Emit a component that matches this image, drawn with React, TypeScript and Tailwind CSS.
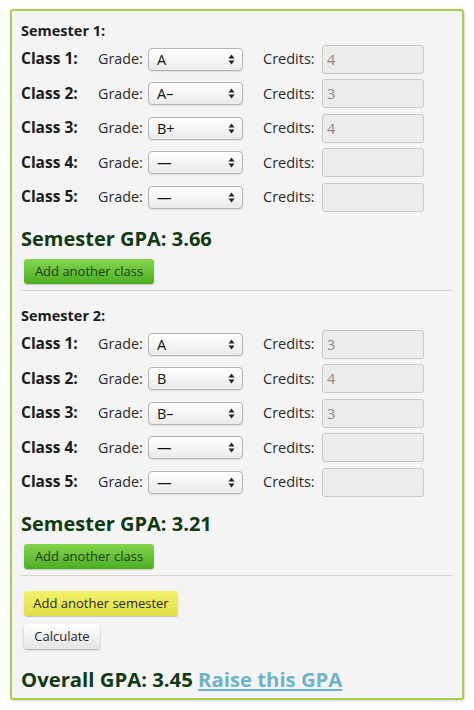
import React from "react";

type Row = { grade: string; credits: string };

const sem1: Row[] = [
  { grade: "A", credits: "4" },
  { grade: "A–", credits: "3" },
  { grade: "B+", credits: "4" },
  { grade: "—", credits: "" },
  { grade: "—", credits: "" },
];
const sem2: Row[] = [
  { grade: "A", credits: "3" },
  { grade: "B", credits: "4" },
  { grade: "B–", credits: "3" },
  { grade: "—", credits: "" },
  { grade: "—", credits: "" },
];

function Arrows() {
  return (
    <svg width="7" height="11" viewBox="0 0 7 11" className="absolute right-[7px] top-[5px]">
      <path d="M3.5 0.5 L6.5 4.5 L0.5 4.5 Z" fill="#222" />
      <path d="M3.5 10.5 L6.5 6.5 L0.5 6.5 Z" fill="#222" />
    </svg>
  );
}

function ClassRow({ i, r }: { i: number; r: Row }) {
  return (
    <div className="flex h-[29px] items-center">
      <span className="w-[77px] text-[15.5px] font-bold text-[#1b1b1b]">Class {i}:</span>
      <span className="w-[50px] text-[14.3px] text-[#2a2a2a]">Grade:</span>
      <div className="relative h-[23px] w-[95px] rounded-[4px] border border-[#b4b4b4] bg-gradient-to-b from-white to-[#ebebeb] pl-[8px] text-[14.5px] leading-[21px] text-[#111] shadow-[0_1px_1px_rgba(0,0,0,0.08)]">
        {r.grade}
        <Arrows />
      </div>
      <span className="ml-[20px] w-[59px] text-[14.5px] text-[#2a2a2a]">Credits:</span>
      <div className="h-[29px] w-[102px] rounded-[3px] border border-[#c9c9c9] bg-[#ececec] pl-[4px] text-[14.5px] leading-[27px] text-[#8a8a8a]">
        {r.credits}
      </div>
    </div>
  );
}

function Semester({ n, rows, gpa }: { n: number; rows: Row[]; gpa: string }) {
  return (
    <div>
      <div className="h-[20px] text-[14.5px] font-bold leading-[20px] text-[#1b1b1b]">Semester {n}:</div>
      <div className="mt-[3.5px] flex flex-col gap-[5.5px]">
        {rows.map((r, k) => (
          <ClassRow key={k} i={k + 1} r={r} />
        ))}
      </div>
      <div className="mt-[13px] h-[28px] text-[20px] font-bold leading-[28px] text-[#0f3a12]">
        Semester GPA: {gpa}
      </div>
      <button className="ml-[3px] mt-[6.5px] h-[25px] w-[130px] rounded-[3px] bg-gradient-to-b from-[#84d64e] to-[#4cae20] text-[13px] text-[#233a14] shadow-[0_1px_1px_rgba(0,0,0,0.2)]">
        Add another class
      </button>
      <div className="mt-[6px] h-px bg-[#d6d6d6]" />
    </div>
  );
}

export default function App() {
  return (
    <div className="min-h-[710px] bg-white pl-[10px] pt-[9px]" style={{ fontFamily: '"Open Sans", sans-serif' }}>
      <div className="h-[691px] w-[454px] rounded-[3px] border-2 border-[#a8d14a] bg-[#f4f4f4] px-[9px] pt-[10px] shadow-[1px_1px_2px_rgba(0,0,0,0.15)]">
        <Semester n={1} rows={sem1} gpa="3.66" />
        <div className="mt-[15px]">
          <Semester n={2} rows={sem2} gpa="3.21" />
        </div>
        <div className="mt-[15px] flex flex-col items-start gap-[8px]">
          <button className="ml-[3px] h-[25px] w-[154px] rounded-[3px] bg-gradient-to-b from-[#f2f26a] to-[#e0e046] text-[13px] text-[#2a2a10] shadow-[0_1px_1px_rgba(0,0,0,0.2)]">
            Add another semester
          </button>
          <button className="ml-[3px] h-[25px] w-[76px] rounded-[3px] bg-gradient-to-b from-white to-[#e4e4e4] text-[13px] text-[#222] shadow-[0_1px_2px_rgba(0,0,0,0.3)]">
            Calculate
          </button>
        </div>
        <div className="mt-[15.5px] h-[28px] text-[20.3px] font-bold leading-[28px] text-[#0f3a12]">
          Overall GPA: 3.45{" "}
          <a className="text-[#6fb3c9] underline">Raise this GPA</a>
        </div>
      </div>
    </div>
  );
}
